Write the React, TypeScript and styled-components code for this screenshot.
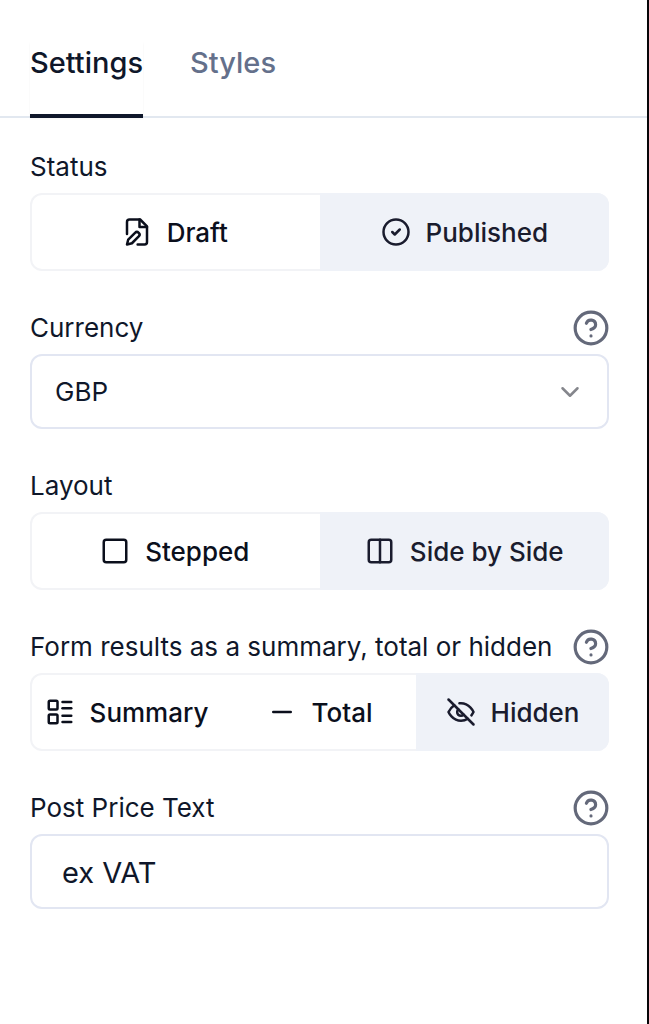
import React, { useState } from 'react';
import styled, { createGlobalStyle } from 'styled-components';
import { ChevronDown, CircleCheck, CircleQuestionMark, Columns2, LayoutList, Minus, Square } from 'lucide-react';

const GlobalStyle = createGlobalStyle`
  *, *::before, *::after { box-sizing: border-box; }
  body {
    margin: 0;
    background: #fff;
    color: #0f172a;
    font-family: Inter, "Liberation Sans", sans-serif;
  }
  button, input, select { font: inherit; color: inherit; }
`;

const Panel = styled.main`
  min-height: 100vh;
  background: #fff;
  border-right: 2px solid #060608;
`;

const TabBar = styled.div`
  display: flex;
  gap: 47px;
  padding: 42px 30px 0;
  border-bottom: 2px solid #e2e8f0;
`;

const Tab = styled.button<{ $active: boolean }>`
  height: 76px;
  margin-bottom: -2px;
  padding: 0 0 30px;
  border: 0;
  border-bottom: 4px solid ${(p) => (p.$active ? '#0f172a' : 'transparent')};
  background: transparent;
  box-shadow: ${(p) => (p.$active ? '0 1px 2px rgba(0, 0, 0, 0.05)' : 'none')};
  color: ${(p) => (p.$active ? '#0f172a' : '#64708b')};
  font-size: 29px;
  font-weight: 500;
  line-height: 42px;
  cursor: pointer;
`;

const Form = styled.form`
  display: flex;
  flex-direction: column;
  gap: 38px;
  padding: 30px 38px 30px 30px;
`;

const Field = styled.div`
  display: flex;
  flex-direction: column;
  gap: 7px;
`;

const FieldHead = styled.div`
  display: flex;
  align-items: center;
  justify-content: space-between;
  height: 38px;
  font-size: 26px;
  line-height: 40px;
  white-space: nowrap;
`;

const HelpButton = styled.button`
  display: flex;
  margin: 0 -1px 0 0;
  padding: 0;
  border: 0;
  background: transparent;
  color: #64697a;
  cursor: pointer;
`;

const Segments = styled.div`
  display: grid;
  grid-auto-flow: column;
  grid-auto-columns: 1fr;
  height: 78px;
  border-radius: 12px;
  box-shadow: inset 0 0 0 2px #f2f3f6;
  overflow: hidden;
`;

const Segment = styled.label<{ $selected: boolean }>`
  display: flex;
  align-items: center;
  justify-content: center;
  gap: 15px;
  background: ${(p) => (p.$selected ? '#eff2f8' : 'transparent')};
  color: ${(p) => (p.$selected ? '#1a1c2e' : '#0b0f1c')};
  font-size: 26px;
  font-weight: 500;
  cursor: pointer;
`;

const HiddenRadio = styled.input`
  position: absolute;
  opacity: 0;
  pointer-events: none;
`;

const SelectWrap = styled.div`
  display: grid;
  align-items: center;

  > * { grid-area: 1 / 1; }
  > svg {
    justify-self: end;
    margin-right: 24px;
    color: #85868c;
    pointer-events: none;
  }
`;

const Select = styled.select`
  appearance: none;
  width: 100%;
  height: 75px;
  padding: 0 60px 0 23px;
  border: 2px solid #e2e6f2;
  border-radius: 12px;
  background: #fff;
  font-size: 26px;
`;

const TextInput = styled.input`
  width: 100%;
  height: 75px;
  padding: 2px 30px 0;
  border: 2px solid #e2e6f2;
  border-radius: 12px;
  background: #fff;
  font-size: 29px;
`;

const Stroke = styled.svg.attrs({
  width: 30,
  height: 30,
  viewBox: '0 0 24 24',
  fill: 'none',
  stroke: 'currentColor',
  strokeWidth: 2,
  strokeLinecap: 'round',
  strokeLinejoin: 'round',
})`
  flex: none;
`;

const DraftIcon = () => (
  <Stroke>
    <path d="M4 13.5V4a2 2 0 0 1 2-2h8.5L20 7.5V20a2 2 0 0 1-2 2h-5.5" />
    <path d="M14 2v6h6" />
    <path d="M10.42 12.61a2.1 2.1 0 1 1 2.97 2.97L7.95 21 4 22l.99-3.95 5.43-5.44Z" />
  </Stroke>
);

const HiddenIcon = () => (
  <Stroke>
    <path d="M9.88 9.88a3 3 0 1 0 4.24 4.24" />
    <path d="M10.73 5.08A10.43 10.43 0 0 1 12 5c7 0 10 7 10 7a13.16 13.16 0 0 1-1.67 2.68" />
    <path d="M6.61 6.61A13.526 13.526 0 0 0 2 12s3 7 10 7a9.74 9.74 0 0 0 5.39-1.61" />
    <path d="m2 2 20 20" />
  </Stroke>
);

type Option = { value: string; icon: React.ReactNode };

const statusOptions: Option[] = [
  { value: 'Draft', icon: <DraftIcon /> },
  { value: 'Published', icon: <CircleCheck size={30} /> },
];
const layoutOptions: Option[] = [
  { value: 'Stepped', icon: <Square size={30} /> },
  { value: 'Side by Side', icon: <Columns2 size={30} /> },
];
const resultOptions: Option[] = [
  { value: 'Summary', icon: <LayoutList size={30} /> },
  { value: 'Total', icon: <Minus size={30} /> },
  { value: 'Hidden', icon: <HiddenIcon /> },
];

function Help({ topic }: { topic: string }) {
  return (
    <HelpButton type="button" aria-label={`Help: ${topic}`}>
      <CircleQuestionMark size={38} />
    </HelpButton>
  );
}

function SegmentedField(props: { name: string; label: string; options: Option[]; initial: string; help?: boolean }) {
  const [value, setValue] = useState(props.initial);
  const labelId = `${props.name}-label`;
  return (
    <Field role="radiogroup" aria-labelledby={labelId}>
      <FieldHead>
        <span id={labelId}>{props.label}</span>
        {props.help && <Help topic={props.label} />}
      </FieldHead>
      <Segments>
        {props.options.map((option) => (
          <Segment key={option.value} $selected={value === option.value}>
            <HiddenRadio
              type="radio"
              name={props.name}
              value={option.value}
              checked={value === option.value}
              onChange={() => setValue(option.value)}
            />
            {option.icon}
            <span>{option.value}</span>
          </Segment>
        ))}
      </Segments>
    </Field>
  );
}

export default function App() {
  const [tab, setTab] = useState('Settings');
  return (
    <>
      <GlobalStyle />
      <Panel>
        <TabBar role="tablist">
          {['Settings', 'Styles'].map((name) => (
            <Tab key={name} type="button" role="tab" aria-selected={tab === name} $active={tab === name} onClick={() => setTab(name)}>
              {name}
            </Tab>
          ))}
        </TabBar>
        <Form>
          <SegmentedField name="status" label="Status" options={statusOptions} initial="Published" />
          <Field>
            <FieldHead>
              <label htmlFor="currency">Currency</label>
              <Help topic="Currency" />
            </FieldHead>
            <SelectWrap>
              <Select id="currency" defaultValue="GBP">
                <option>GBP</option>
                <option>EUR</option>
                <option>USD</option>
              </Select>
              <ChevronDown size={30} />
            </SelectWrap>
          </Field>
          <SegmentedField name="layout" label="Layout" options={layoutOptions} initial="Side by Side" />
          <SegmentedField
            name="results"
            label="Form results as a summary, total or hidden"
            options={resultOptions}
            initial="Hidden"
            help
          />
          <Field>
            <FieldHead>
              <label htmlFor="post-price">Post Price Text</label>
              <Help topic="Post Price Text" />
            </FieldHead>
            <TextInput id="post-price" type="text" defaultValue="ex VAT" />
          </Field>
        </Form>
      </Panel>
    </>
  );
}
